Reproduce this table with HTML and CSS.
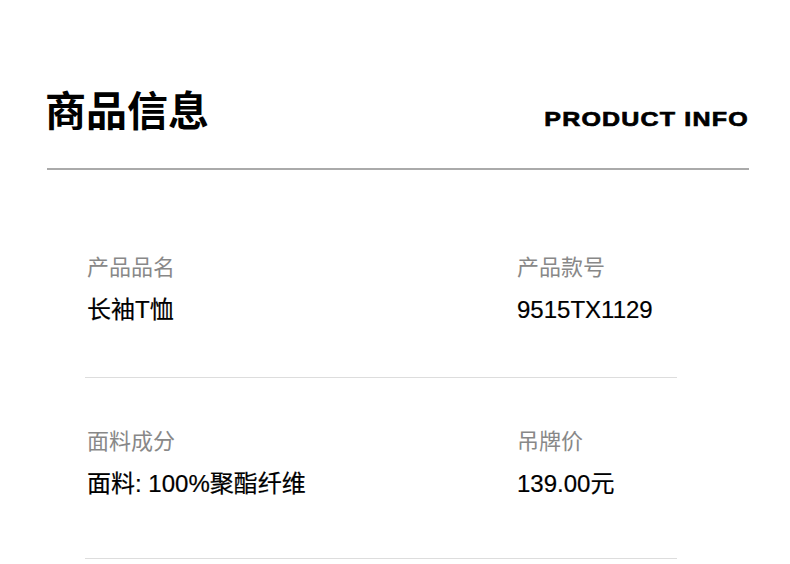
FILE: index.html
```html
<!DOCTYPE html>
<html lang="zh-CN">
<head>
    <meta charset="UTF-8">
    <meta name="viewport" content="width=device-width, initial-scale=1.0">
    <title>商品信息</title>
    <link rel="stylesheet" href="styles.css">
</head>
<body>
    <div class="page">
        <div class="header">
            <h1 class="title">商品信息</h1>
            <div class="subtitle">PRODUCT INFO</div>
        </div>

        <div class="specs">
            <div class="row first">
                <div class="cell">
                    <div class="label">产品品名</div>
                    <div class="value">长袖T恤</div>
                </div>
                <div class="cell">
                    <div class="label">产品款号</div>
                    <div class="value">9515TX1129</div>
                </div>
            </div>
            <div class="row">
                <div class="cell">
                    <div class="label">面料成分</div>
                    <div class="value">面料: 100%聚酯纤维</div>
                </div>
                <div class="cell">
                    <div class="label">吊牌价</div>
                    <div class="value">139.00元</div>
                </div>
            </div>
        </div>
    </div>
</body>
</html>
```

FILE: styles.css
```css
body {
    margin: 0;
    background-color: #fff;
    font-family: "Liberation Sans", "Noto Sans CJK SC", sans-serif;
    color: #000;
}

.page {
    width: 790px;
    height: 564px;
    overflow: hidden;
}

.header {
    display: flex;
    justify-content: space-between;
    align-items: baseline;
    margin: 0 41px 0 47px;
    padding-top: 88px;
    padding-bottom: 37px;
    border-bottom: 2px solid #aaa;
}

.title {
    margin: 0;
    font-family: "Noto Sans CJK SC", sans-serif;
    font-size: 41px;
    font-weight: 700;
    line-height: 40px;
    margin-left: -2px;
}

.subtitle {
    font-family: "Liberation Sans", sans-serif;
    font-size: 21px;
    font-weight: 700;
    letter-spacing: 1px;
    -webkit-text-stroke: 0.7px #000;
    transform: scaleX(1.19);
    transform-origin: right center;
}

.specs {
    margin-left: 85px;
    width: 592px;
}

.row {
    display: grid;
    grid-template-columns: 430px 1fr;
    padding: 48px 0 0 2px;
    height: 132px;
    border-bottom: 1px solid #ddd;
}

.row.first {
    padding-top: 82px;
    height: 125px;
}

.label {
    font-family: "Noto Sans CJK SC", sans-serif;
    font-size: 22px;
    line-height: 26px;
    color: #888;
}

.value {
    margin-top: 19px;
    font-size: 24px;
    line-height: 26px;
    -webkit-text-stroke: 0.2px #000;
}
```
